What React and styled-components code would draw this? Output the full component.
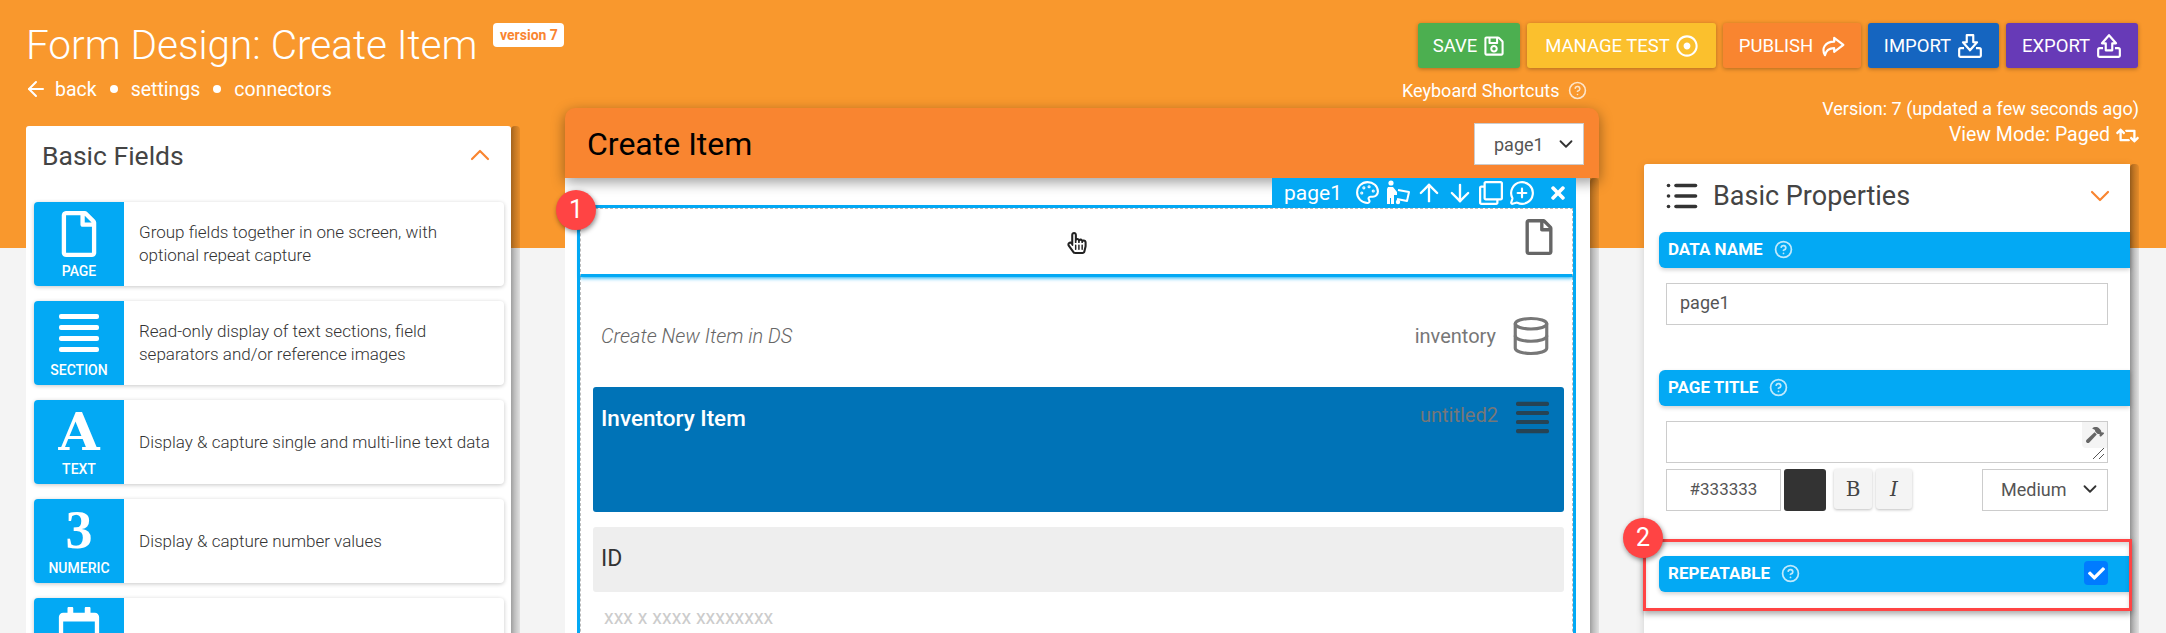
import React from "react";
import styled, { createGlobalStyle } from "styled-components";
import {
  ArrowUp,
  ArrowDown,
  ArrowLeft,
  ChevronUp,
  ChevronDown,
  CircleHelp,
  Database,
  List,
  MessageCirclePlus,
  Palette,
} from "lucide-react";
import {
  FaCheck,
  FaHammer,
  FaRegCalendar,
  FaRegClone,
  FaRegDotCircle,
  FaRegFile,
  FaRegHandPointer,
  FaRegSave,
  FaRetweet,
  FaTimes,
} from "react-icons/fa";

const blue = "#03a9f4";
const orange = "#f98530";
const red = "#ff4444";

const GlobalStyle = createGlobalStyle`
  html, body {
    margin: 0;
    height: 100%;
    overflow: hidden;
  }
  body {
    font-family: Roboto, "Liberation Sans", sans-serif;
    color: #444;
    background: linear-gradient(#f9982d 248px, #f4f4f4 248px);
  }
  * { box-sizing: border-box; }
`;

const Page = styled.div`
  height: 633px;
  padding: 0 28px 0 26px;
  overflow: hidden;
`;

// Header
const Header = styled.header`
  height: 96px;
  display: flex;
  justify-content: space-between;
`;

const TitleBlock = styled.div`
  padding-top: 21px;
`;

const TitleRow = styled.div`
  display: flex;
  align-items: flex-start;
  gap: 16px;
`;

const Title = styled.h1`
  margin: 0;
  font-size: 40.5px;
  line-height: 48px;
  font-weight: 300;
  color: #fff;
  white-space: nowrap;
`;

const VersionBadge = styled.span`
  margin-top: 2px;
  width: 71px;
  height: 24px;
  border-radius: 4px;
  background: #fff;
  color: ${orange};
  font-size: 14px;
  font-weight: 700;
  line-height: 24px;
  text-align: center;
  white-space: nowrap;
`;

const Nav = styled.nav`
  margin-top: 8px;
  height: 24px;
  display: flex;
  align-items: center;
  color: #fff;
  font-size: 19.5px;
  svg { margin: 0 7px 0 -2px; }
`;

const NavDot = styled.span`
  width: 8px;
  height: 8px;
  margin: 0 13px;
  border-radius: 50%;
  background: #fff;
`;

const Actions = styled.div`
  padding-top: 23px;
  display: flex;
  flex-direction: column;
  align-items: flex-end;
`;

const ButtonRow = styled.div`
  display: flex;
  gap: 7px;
`;

const ActionButton = styled.button`
  height: 45px;
  width: ${(p) => p.$width}px;
  border: 0;
  border-radius: 3px;
  background: ${(p) => p.$color};
  color: #fff;
  font-family: inherit;
  font-size: 18.5px;
  box-shadow: 0 1px 4px rgba(0, 0, 0, 0.3);
  display: flex;
  align-items: center;
  justify-content: center;
  gap: 6px;
  white-space: nowrap;
  padding: 0;
  svg { font-size: 22px; flex: none; }
`;

const Shortcuts = styled.div`
  align-self: flex-start;
  margin: 12px 0 0 -16px;
  height: 22px;
  display: flex;
  align-items: center;
  gap: 8px;
  color: #fff;
  font-size: 18px;
  white-space: nowrap;
  svg { opacity: 0.75; }
`;

// Columns
const Columns = styled.div`
  display: grid;
  grid-template-columns: 494px 1034px 495px;
  column-gap: 45px;
`;

const LeftColumn = styled.section`
  margin-top: 30px;
  display: flex;
`;

const CenterColumn = styled.section`
  margin-top: 12px;
`;

const ScrollTrack = styled.div`
  flex: none;
  width: 9px;
  height: 640px;
  border-radius: 4px 4px 0 0;
  background: linear-gradient(90deg, rgba(0, 0, 0, 0.35), rgba(0, 0, 0, 0.22) 40%, rgba(0, 0, 0, 0.08));
`;

// Left panel
const FieldsPanel = styled.div`
  flex: none;
  width: 485px;
  padding: 0 7px 0 8px;
  border-radius: 3px 3px 0 0;
  background: #fff;
`;

const PanelHead = styled.div`
  height: 76px;
  padding: 0 8px 18px 8px;
  display: flex;
  align-items: center;
  justify-content: space-between;
  font-size: 26.5px;
  color: #444;
  svg { color: ${orange}; }
`;

const FieldCards = styled.div`
  display: flex;
  flex-direction: column;
  gap: 15px;
`;

const FieldCard = styled.div`
  height: 84px;
  display: flex;
  border-radius: 4px;
  overflow: hidden;
  background: #fff;
  box-shadow: 0 1px 4px rgba(0, 0, 0, 0.22);
`;

const FieldIcon = styled.div`
  flex: none;
  width: 90px;
  padding-top: 7px;
  background: ${blue};
  color: #fff;
  display: flex;
  flex-direction: column;
  align-items: center;
`;

const IconSlot = styled.div`
  height: 49px;
  display: flex;
  align-items: center;
  justify-content: center;
  font-size: 46px;
`;

const FieldGlyph = styled.span`
  font-family: ${(p) => p.$font}, serif;
  font-weight: 700;
  font-size: ${(p) => p.$size}px;
  line-height: 49px;
`;

const FieldTag = styled.span`
  margin-top: 4px;
  font-size: 14px;
  font-weight: 500;
  line-height: 18px;
`;

const FieldText = styled.p`
  margin: 0;
  padding: 0 12px 0 15px;
  align-self: center;
  font-size: 17px;
  font-weight: 300;
  line-height: 23px;
  color: #333;
`;

// Center form
const FormHead = styled.div`
  position: relative;
  z-index: 1;
  height: 70px;
  padding: 2px 15px 0 22px;
  border-radius: 10px 10px 0 0;
  background: ${orange};
  box-shadow: 0 4px 14px rgba(0, 0, 0, 0.4);
  display: flex;
  align-items: center;
  justify-content: space-between;
`;

const FormTitle = styled.h2`
  margin: 0;
  font-size: 32px;
  font-weight: 400;
  color: #000;
`;

const SelectBox = styled.div`
  width: ${(p) => p.$width}px;
  height: ${(p) => p.$height}px;
  padding: 0 6px 0 ${(p) => p.$pad}px;
  border: 1px solid #ccc;
  background: #fff;
  color: #555;
  font-size: 18px;
  display: flex;
  align-items: center;
  justify-content: space-between;
  svg { color: #333; }
`;

const FormBody = styled.div`
  display: flex;
  height: 460px;
`;

const Canvas = styled.div`
  flex: 1;
  padding: 0 14px 0 12px;
  background: #fff;
  display: flex;
  flex-direction: column;
`;

const Toolbar = styled.div`
  position: relative;
  z-index: 2;
  flex: none;
  align-self: flex-end;
  width: 304px;
  height: 27px;
  padding: 2px 2px 0 12px;
  background: ${blue};
  color: #fff;
  font-size: 21px;
  display: flex;
  align-items: center;
`;

const ToolIcons = styled.div`
  display: flex;
  align-items: center;
  margin-left: 10px;
`;

const ToolSlot = styled.span`
  width: 31px;
  display: flex;
  justify-content: center;
  &:last-child { margin-left: 5px; }
`;

const PageBox = styled.div`
  flex: 1;
  border: solid ${blue};
  border-width: 3px 3px 0;
`;

const SelectedRow = styled.div`
  height: 69px;
  border: 1px dashed #bbb;
  border-bottom: 3px solid ${blue};
  box-shadow: 0 1px 4px ${blue};
  display: flex;
  justify-content: flex-end;
  padding: 10px 15px 0 0;
  color: #666;
  font-size: 36px;
`;

const PageContent = styled.div`
  height: 100%;
  padding: 0 8px 0 12px;
  border: dashed #bbb;
  border-width: 0 1px;
`;

const SourceRow = styled.div`
  height: 110px;
  padding: 8px 12px 0 8px;
  display: flex;
  align-items: center;
  justify-content: space-between;
  color: #777;
  font-size: 20px;
`;

const SourceNote = styled.em`
  font-weight: 300;
  color: #666;
`;

const SourceTarget = styled.div`
  display: flex;
  align-items: center;
  gap: 14px;
  svg { color: #777; }
`;

const SectionBlock = styled.div`
  height: 125px;
  padding: 14px 15px 0 8px;
  border-radius: 3px;
  background: #0073b7;
  display: flex;
  justify-content: space-between;
  align-items: flex-start;
`;

const SectionName = styled.span`
  font-size: 22.5px;
  font-weight: 500;
  line-height: 34px;
  color: #fff;
`;

const SectionMeta = styled.div`
  display: flex;
  align-items: flex-start;
  gap: 18px;
  font-size: 20px;
  line-height: 28px;
  color: #777;
  svg { color: #333; opacity: 0.75; }
`;

const IdLabel = styled.div`
  height: 65px;
  margin-top: 15px;
  padding: 0 0 2px 8px;
  border-radius: 3px;
  background: #eee;
  color: #333;
  font-size: 23px;
  display: flex;
  align-items: center;
`;

const Placeholder = styled.div`
  margin-top: 14px;
  padding-left: 11px;
  color: #ccc;
  font-size: 19.5px;
  line-height: 24px;
`;

const CursorMark = styled.span`
  position: absolute;
  left: 486px;
  top: 24px;
  color: #222;
  font-size: 22px;
`;

const SelectedWrap = styled.div`
  position: relative;
`;

const StepBadge = styled.span`
  position: absolute;
  z-index: 5;
  left: ${(p) => p.$left}px;
  top: ${(p) => p.$top}px;
  width: 40px;
  height: 40px;
  border-radius: 50%;
  background: ${red};
  color: #fff;
  font-size: 25px;
  line-height: 40px;
  text-align: center;
  box-shadow: 1px 2px 5px rgba(0, 0, 0, 0.45);
`;

// Right panel
const RightColumn = styled.section``;

const VersionInfo = styled.div`
  height: 68px;
  color: #fff;
  font-size: 18px;
  line-height: 26px;
  text-align: right;
`;

const ViewMode = styled.div`
  display: flex;
  justify-content: flex-end;
  align-items: center;
  gap: 6px;
  font-size: 19.5px;
  svg { font-size: 23px; }
`;

const PropsWrap = styled.div`
  display: flex;
`;

const PropsPanel = styled.div`
  flex: none;
  width: 486px;
  padding-left: 15px;
  border-radius: 3px 0 0 0;
  background: #fff;
  box-shadow: 0 2px 8px rgba(0, 0, 0, 0.15);
`;

const PropsHead = styled.div`
  height: 68px;
  padding: 0 14px 4px 5px;
  display: flex;
  align-items: center;
  font-size: 27px;
  color: #444;
`;

const ListMark = styled.span`
  width: 49px;
  display: flex;
  color: #333;
`;

const HeadChevron = styled.span`
  margin-left: auto;
  display: flex;
  color: ${orange};
`;

const PropBar = styled.div`
  position: relative;
  height: 36px;
  padding: 0 22px 2px 9px;
  border-radius: 6px 0 0 6px;
  background: ${blue};
  color: #fff;
  font-size: 17px;
  font-weight: 700;
  box-shadow: 0 2px 4px rgba(0, 0, 0, 0.18);
  display: flex;
  align-items: center;
  gap: 11px;
  svg { opacity: 0.75; }
`;

const PropBody = styled.div`
  margin: 15px 22px 45px 7px;
`;

const TextField = styled.div`
  position: relative;
  height: 42px;
  padding-left: 13px;
  border: 1px solid #ccc;
  color: #555;
  font-size: 18px;
  line-height: 38px;
`;

const HammerButton = styled.span`
  position: absolute;
  right: 0;
  top: 0;
  width: 25px;
  height: 26px;
  border-radius: 0 0 0 4px;
  background: #f4f4f4;
  color: #666;
  font-size: 18px;
  display: flex;
  align-items: center;
  justify-content: center;
`;

const ResizeGrip = styled.svg`
  position: absolute;
  right: 2px;
  bottom: 2px;
  width: 13px;
  height: 13px;
`;

const StyleRow = styled.div`
  margin-top: 6px;
  height: 42px;
  display: flex;
`;

const ColorField = styled.div`
  width: 115px;
  border: 1px solid #ccc;
  color: #555;
  font-size: 17px;
  line-height: 38px;
  text-align: center;
`;

const Swatch = styled.div`
  width: 42px;
  margin-left: 3px;
  border-radius: 3px;
  background: #333;
`;

const StyleButton = styled.button`
  width: ${(p) => p.$width}px;
  height: 40px;
  margin-left: ${(p) => p.$gap}px;
  padding: 0;
  border: 0;
  border-radius: 3px;
  background: #f4f4f4;
  box-shadow: 0 1px 3px rgba(0, 0, 0, 0.25);
  color: #444;
  font-family: "DejaVu Serif", serif;
  font-size: 20px;
  font-style: ${(p) => (p.$italic ? "italic" : "normal")};
`;

const RowSelect = styled(SelectBox)`
  margin-left: auto;
  padding-bottom: 2px;
`;

const RepeatSection = styled.div`
  position: relative;
`;

const Highlight = styled.div`
  position: absolute;
  z-index: 3;
  left: -16px;
  right: -2px;
  top: -17px;
  bottom: -19px;
  border: 3px solid ${red};
  box-shadow: 0 3px 6px rgba(0, 0, 0, 0.35), inset 0 3px 4px rgba(0, 0, 0, 0.15);
  pointer-events: none;
`;

const CheckBox = styled.span`
  margin-left: auto;
  width: 24px;
  height: 24px;
  border-radius: 4px;
  background: #007bff;
  display: flex;
  align-items: center;
  justify-content: center;
  svg { font-size: 17px; opacity: 1; }
`;

// Icons the packages have no close match for
const LinesIcon = ({ width, height }) => (
  <svg width={width} height={height} viewBox="0 0 40 38" fill="currentColor">
    <rect y="0" width="40" height="5" rx="2" />
    <rect y="11" width="40" height="5" rx="2" />
    <rect y="22" width="40" height="5" rx="2" />
    <rect y="33" width="40" height="5" rx="2" />
  </svg>
);

const ShareIcon = () => (
  <svg width="26" height="26" viewBox="0 0 24 24" fill="none" stroke="currentColor" strokeWidth="2" strokeLinejoin="round">
    <path d="M14 4.5 L22.5 11 L14 17.5 V14 C9 14 6.5 16 5.5 20.5 C2 14.5 5.5 8 14 8 Z" />
  </svg>
);

const TrayIcon = ({ arrow }) => (
  <svg width="26" height="26" viewBox="0 0 24 24" fill="none" stroke="currentColor" strokeWidth="2" strokeLinejoin="round">
    <path d={arrow} />
    <path d="M6.5 14 H3.5 A1.5 1.5 0 0 0 2 15.5 V21 A1 1 0 0 0 3 22 H21 A1 1 0 0 0 22 21 V15.5 A1.5 1.5 0 0 0 20.5 14 H17.5" />
  </svg>
);

const ARROW_DOWN = "M9 2 H15 V8.5 H18.5 L12 16 L5.5 8.5 H9 Z";
const ARROW_UP = "M12 2 L18.5 9.5 H15 V16 H9 V9.5 H5.5 Z";

const CarryIcon = () => (
  <svg width="28" height="28" viewBox="0 0 28 28" fill="none" stroke="currentColor" strokeWidth="2">
    <circle cx="7" cy="4" r="2.6" fill="currentColor" stroke="none" />
    <path d="M4 8 H9 L13 13 V16 H10 V25 H7 V19 H6 V25 H3 V10 Z" fill="currentColor" stroke="none" />
    <path d="M14 11 L25 13 L23 22 L13 20" strokeLinejoin="round" />
    <circle cx="14" cy="23" r="2.2" fill="currentColor" stroke="none" />
  </svg>
);

const fields = [
  { tag: "PAGE", icon: <FaRegFile />, text: "Group fields together in one screen, with optional repeat capture" },
  { tag: "SECTION", icon: <LinesIcon width={40} height={38} />, text: "Read-only display of text sections, field separators and/or reference images" },
  { tag: "TEXT", icon: <FieldGlyph $font='"DejaVu Serif"' $size={53}>A</FieldGlyph>, text: "Display & capture single and multi-line text data" },
  { tag: "NUMERIC", icon: <FieldGlyph $font='"Liberation Serif"' $size={54}>3</FieldGlyph>, text: "Display & capture number values" },
  { tag: "calendar", icon: <FaRegCalendar /> },
];

const buttons = [
  { label: "SAVE", color: "#4caf50", width: 102, icon: <FaRegSave /> },
  { label: "MANAGE TEST", color: "#fbc02d", width: 189, icon: <FaRegDotCircle /> },
  { label: "PUBLISH", color: "#f98530", width: 138, icon: <ShareIcon /> },
  { label: "IMPORT", color: "#1565c0", width: 131, icon: <TrayIcon arrow={ARROW_DOWN} /> },
  { label: "EXPORT", color: "#673ab7", width: 132, icon: <TrayIcon arrow={ARROW_UP} /> },
];

const tools = [
  <Palette key="palette" size={25} />,
  <CarryIcon key="carry" />,
  <ArrowUp key="up" size={28} />,
  <ArrowDown key="down" size={28} />,
  <FaRegClone key="clone" size={24} />,
  <MessageCirclePlus key="comment" size={26} />,
  <FaTimes key="close" size={20} />,
];

function App() {
  return (
    <Page>
      <GlobalStyle />
      <Header>
        <TitleBlock>
          <TitleRow>
            <Title>Form Design: Create Item</Title>
            <VersionBadge>version 7</VersionBadge>
          </TitleRow>
          <Nav>
            <ArrowLeft size={24} />
            back
            <NavDot />
            settings
            <NavDot />
            connectors
          </Nav>
        </TitleBlock>
        <Actions>
          <ButtonRow>
            {buttons.map((b) => (
              <ActionButton key={b.label} $color={b.color} $width={b.width}>
                {b.label} {b.icon}
              </ActionButton>
            ))}
          </ButtonRow>
          <Shortcuts>
            Keyboard Shortcuts <CircleHelp size={19} />
          </Shortcuts>
        </Actions>
      </Header>

      <Columns>
        <LeftColumn>
          <FieldsPanel>
            <PanelHead>
              Basic Fields <ChevronUp size={32} strokeWidth={1.6} />
            </PanelHead>
            <FieldCards>
              {fields.map((f) => (
                <FieldCard key={f.tag}>
                  <FieldIcon>
                    <IconSlot>{f.icon}</IconSlot>
                    {f.text && <FieldTag>{f.tag}</FieldTag>}
                  </FieldIcon>
                  {f.text && <FieldText>{f.text}</FieldText>}
                </FieldCard>
              ))}
            </FieldCards>
          </FieldsPanel>
          <ScrollTrack />
        </LeftColumn>

        <CenterColumn>
          <FormHead>
            <FormTitle>Create Item</FormTitle>
            <SelectBox $width={110} $height={42} $pad={19}>
              page1 <ChevronDown size={22} />
            </SelectBox>
          </FormHead>
          <FormBody>
            <Canvas>
              <Toolbar>
                page1
                <ToolIcons>
                  {tools.map((tool) => (
                    <ToolSlot key={tool.key}>{tool}</ToolSlot>
                  ))}
                </ToolIcons>
              </Toolbar>
              <PageBox>
                <SelectedWrap>
                  <StepBadge $left={-24} $top={-18}>1</StepBadge>
                  <CursorMark>
                    <FaRegHandPointer />
                  </CursorMark>
                  <SelectedRow>
                    <FaRegFile />
                  </SelectedRow>
                </SelectedWrap>
                <PageContent>
                  <SourceRow>
                    <SourceNote>Create New Item in DS</SourceNote>
                    <SourceTarget>
                      inventory <Database size={42} strokeWidth={1.8} />
                    </SourceTarget>
                  </SourceRow>
                  <SectionBlock>
                    <SectionName>Inventory Item</SectionName>
                    <SectionMeta>
                      untitled2 <LinesIcon width={33} height={33} />
                    </SectionMeta>
                  </SectionBlock>
                  <IdLabel>ID</IdLabel>
                  <Placeholder>xxx x xxxx xxxxxxxx</Placeholder>
                </PageContent>
              </PageBox>
            </Canvas>
            <ScrollTrack />
          </FormBody>
        </CenterColumn>

        <RightColumn>
          <VersionInfo>
            Version: 7 (updated a few seconds ago)
            <ViewMode>
              View Mode: Paged <FaRetweet />
            </ViewMode>
          </VersionInfo>
          <PropsWrap>
            <PropsPanel>
              <PropsHead>
                <ListMark>
                  <List size={36} strokeWidth={2.4} />
                </ListMark>
                Basic Properties
                <HeadChevron>
                  <ChevronDown size={32} strokeWidth={1.6} />
                </HeadChevron>
              </PropsHead>

              <PropBar>
                DATA NAME <CircleHelp size={19} strokeWidth={2.2} />
              </PropBar>
              <PropBody>
                <TextField>page1</TextField>
              </PropBody>

              <PropBar>
                PAGE TITLE <CircleHelp size={19} strokeWidth={2.2} />
              </PropBar>
              <PropBody>
                <TextField>
                  <HammerButton>
                    <FaHammer />
                  </HammerButton>
                  <ResizeGrip viewBox="0 0 13 13">
                    <path d="M1 12 L12 1 M7 12 L12 7" stroke="#555" strokeWidth="1" />
                  </ResizeGrip>
                </TextField>
                <StyleRow>
                  <ColorField>#333333</ColorField>
                  <Swatch />
                  <StyleButton $width={38} $gap={8}>B</StyleButton>
                  <StyleButton $width={36} $gap={4} $italic>I</StyleButton>
                  <RowSelect $width={126} $height={42} $pad={18}>
                    Medium <ChevronDown size={22} />
                  </RowSelect>
                </StyleRow>
              </PropBody>

              <RepeatSection>
                <StepBadge $left={-36} $top={-38}>2</StepBadge>
                <Highlight />
                <PropBar>
                  REPEATABLE <CircleHelp size={19} strokeWidth={2.2} />
                  <CheckBox>
                    <FaCheck />
                  </CheckBox>
                </PropBar>
              </RepeatSection>
            </PropsPanel>
            <ScrollTrack />
          </PropsWrap>
        </RightColumn>
      </Columns>
    </Page>
  );
}

export default App;
